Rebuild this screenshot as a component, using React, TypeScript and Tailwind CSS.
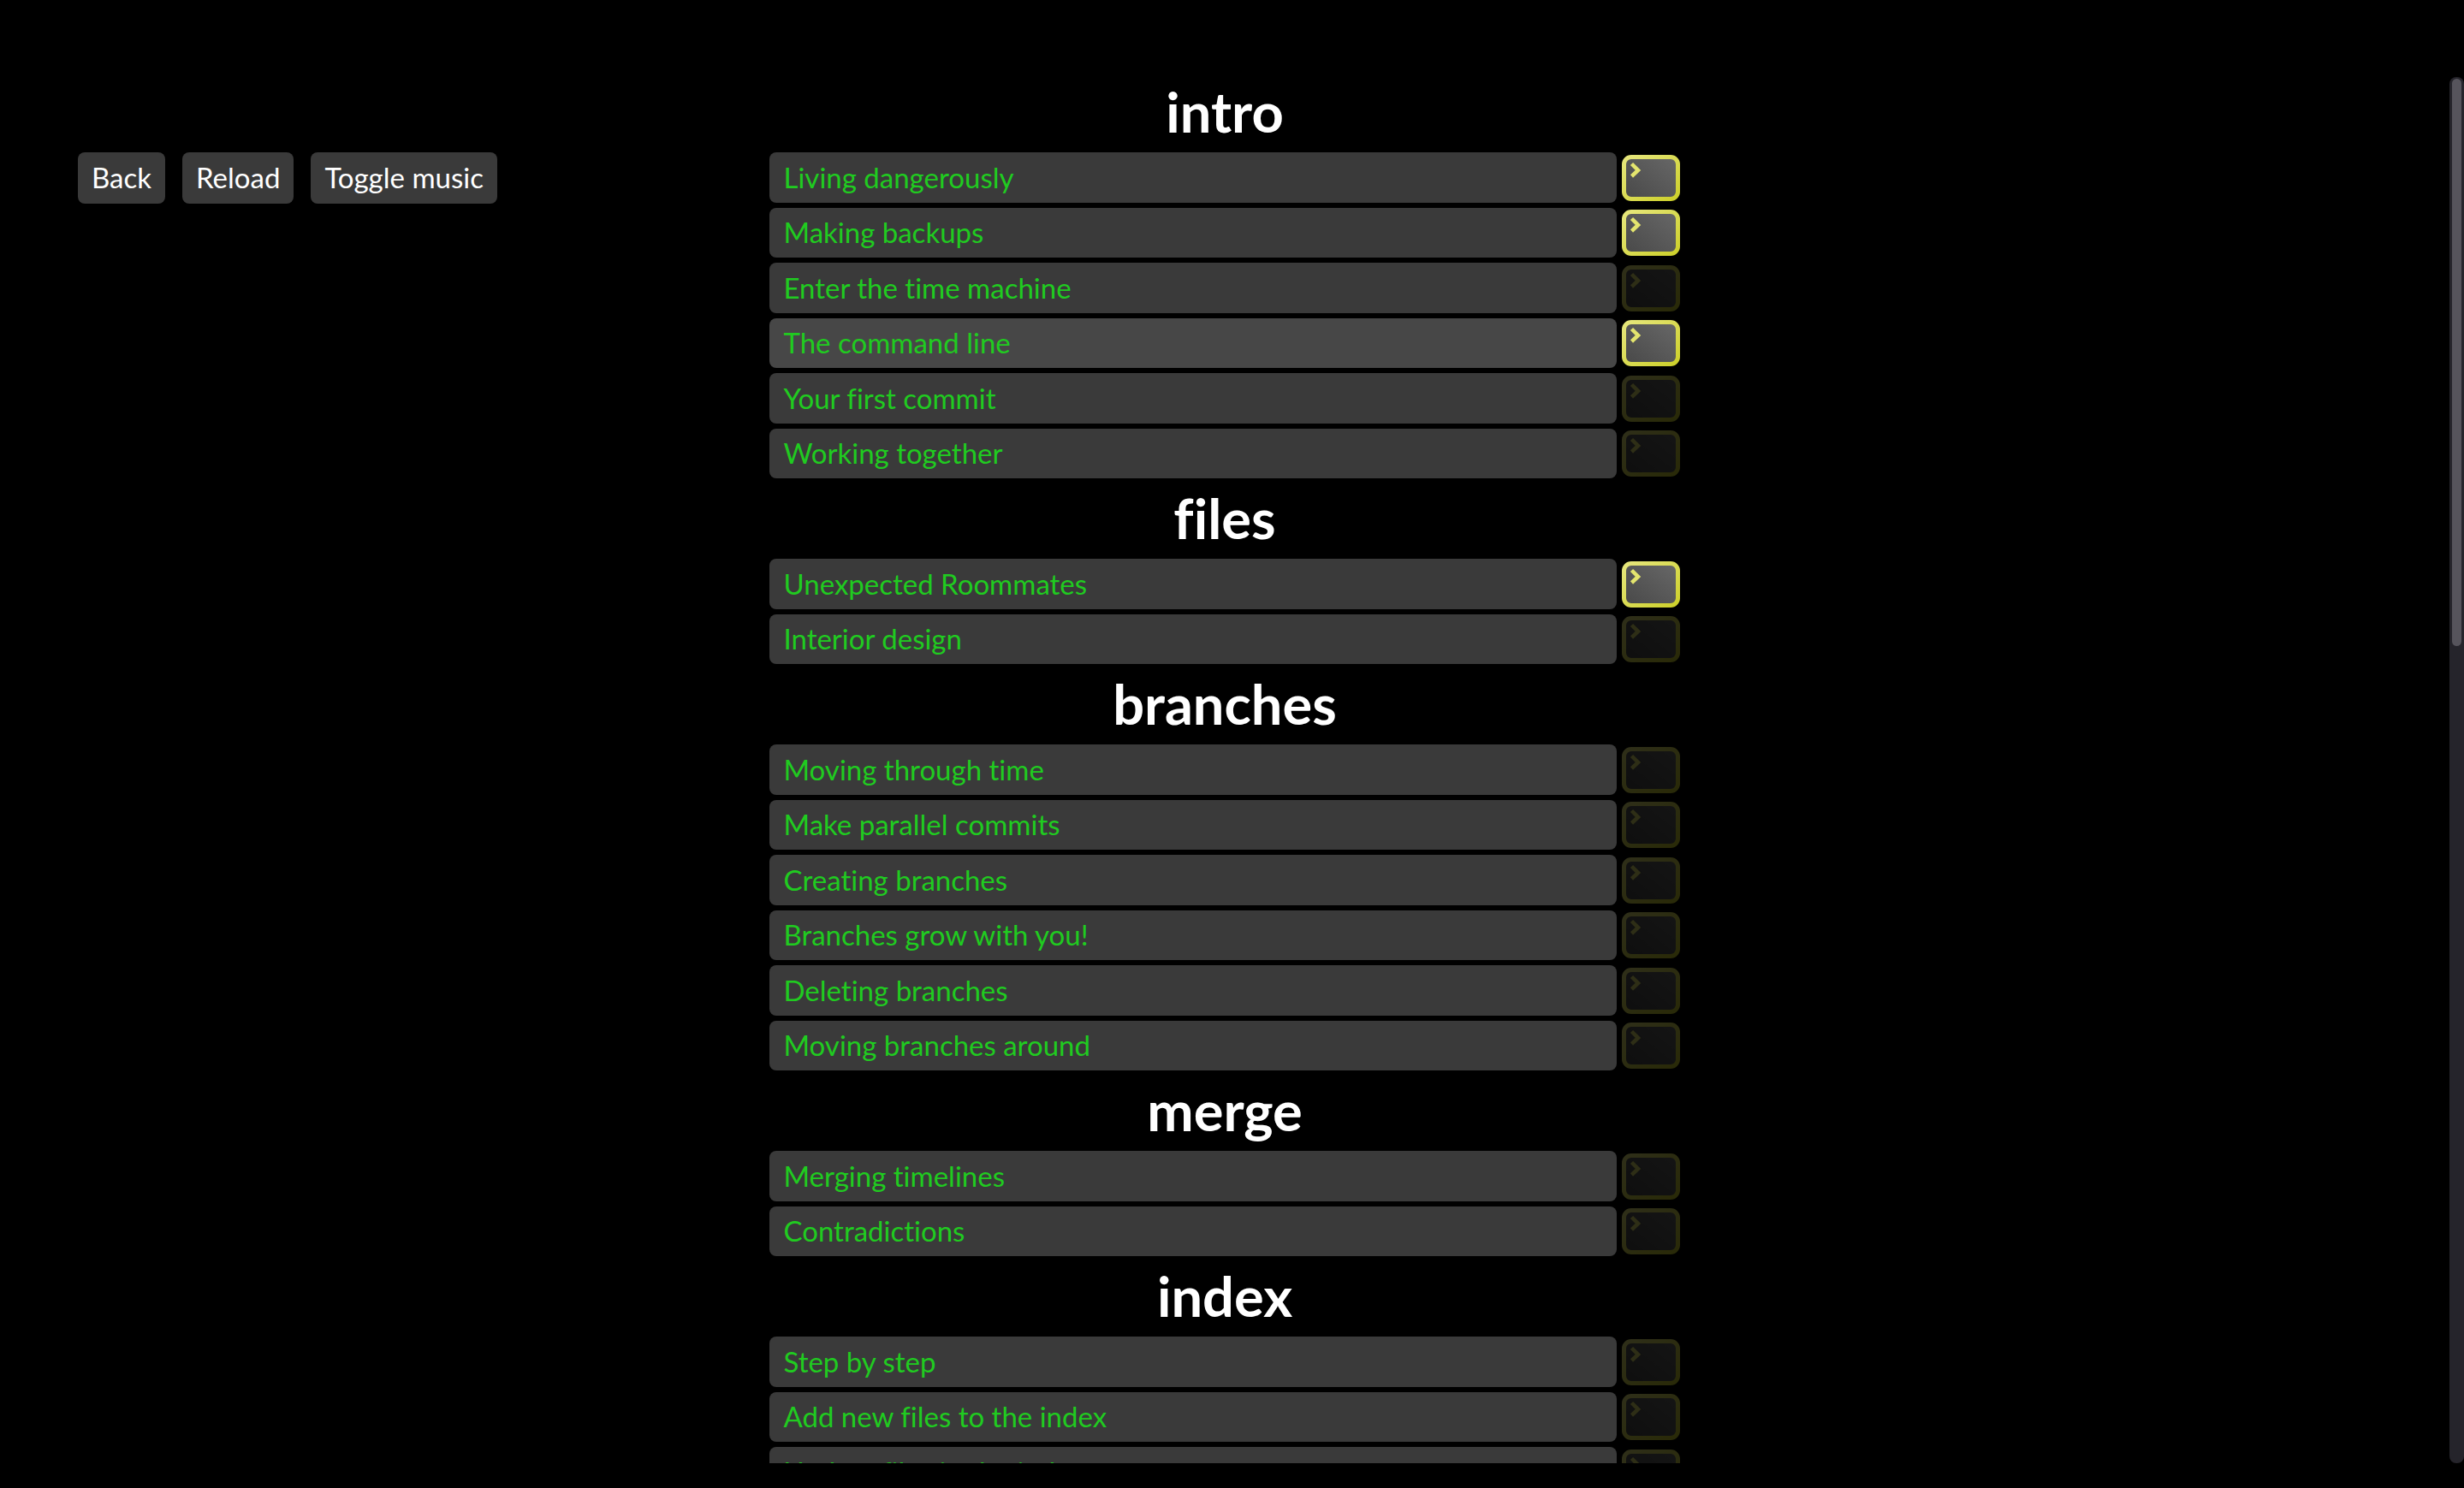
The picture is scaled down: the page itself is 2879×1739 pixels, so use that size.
type Level = { name: string; cli?: boolean; current?: boolean };
type Chapter = { title: string; levels: Level[] };

const chapters: Chapter[] = [
  {
    title: "intro",
    levels: [
      { name: "Living dangerously", cli: true },
      { name: "Making backups", cli: true },
      { name: "Enter the time machine" },
      { name: "The command line", cli: true, current: true },
      { name: "Your first commit" },
      { name: "Working together" },
    ],
  },
  {
    title: "files",
    levels: [{ name: "Unexpected Roommates", cli: true }, { name: "Interior design" }],
  },
  {
    title: "branches",
    levels: [
      { name: "Moving through time" },
      { name: "Make parallel commits" },
      { name: "Creating branches" },
      { name: "Branches grow with you!" },
      { name: "Deleting branches" },
      { name: "Moving branches around" },
    ],
  },
  {
    title: "merge",
    levels: [{ name: "Merging timelines" }, { name: "Contradictions" }],
  },
  {
    title: "index",
    levels: [
      { name: "Step by step" },
      { name: "Add new files to the index" },
      { name: "Update files in the index" },
    ],
  },
];

function TerminalBadge({ active }: { active?: boolean }) {
  return (
    <svg
      viewBox="0 0 68 54"
      className={active ? "h-[54px] w-[68px] shrink-0" : "h-[54px] w-[68px] shrink-0 opacity-20"}
      role="img"
      aria-label={active ? "Solved on the command line" : "Not solved on the command line"}
    >
      <defs>
        <linearGradient id="badge-fill" x1="0" y1="1" x2="1" y2="0">
          <stop offset="0" stopColor="#484848" />
          <stop offset="1" stopColor="#686868" />
        </linearGradient>
        <linearGradient id="badge-edge" x1="0" y1="0" x2="1" y2="1">
          <stop offset="0" stopColor="#e6e67c" />
          <stop offset="1" stopColor="#cdd02b" />
        </linearGradient>
      </defs>
      <rect x="2.5" y="2.5" width="63" height="49" rx="8.5" fill="url(#badge-fill)" stroke="url(#badge-edge)" strokeWidth="5" />
      <path d="M11.5 10.5 L19 18 L11.5 25" fill="none" stroke="#e4e56e" strokeWidth="4.5" />
    </svg>
  );
}

function LevelRow({ level }: { level: Level }) {
  return (
    <li className="flex items-center gap-[6px]">
      <button
        type="button"
        className={
          level.current
            ? "flex h-full flex-1 items-center rounded-lg bg-[#474747] px-4 pb-[2px] text-left text-[#20cb20]"
            : "flex h-full flex-1 items-center rounded-lg bg-[#3a3a3a] px-4 pb-[2px] text-left text-[#20cb20]"
        }
      >
        {level.name}
      </button>
      <TerminalBadge active={level.cli} />
    </li>
  );
}

function MenuButton({ label }: { label: string }) {
  return (
    <button type="button" className="h-[60px] rounded-lg bg-[#3a3a3a] px-4 pb-[2px] whitespace-nowrap text-white">
      {label}
    </button>
  );
}

export default function App() {
  return (
    <div className="flex h-screen bg-black pt-[90px] pb-[29px] font-['Lato',sans-serif] text-[33px] leading-[44px] [font-variant-ligatures:none]">
      <div className="grid min-w-0 flex-1 grid-cols-[11fr_13fr_11fr]">
        <nav className="flex min-w-0 items-start gap-5 pt-[88px] pl-[91px]">
          <MenuButton label="Back" />
          <MenuButton label="Reload" />
          <MenuButton label="Toggle music" />
        </nav>
        <main id="levels" className="min-w-0 overflow-hidden">
          {chapters.map((chapter) => (
            <section key={chapter.title}>
              <h2 className="h-[88px] text-center text-[65px] leading-[80px] font-bold text-white">{chapter.title}</h2>
              <ul className="grid auto-rows-[59px_58px] gap-[6px] pb-[6px]">
                {chapter.levels.map((level) => (
                  <LevelRow key={level.name} level={level} />
                ))}
              </ul>
            </section>
          ))}
        </main>
      </div>
      <div
        role="scrollbar"
        aria-orientation="vertical"
        aria-valuenow={0}
        aria-controls="levels"
        className="w-[17px] rounded-lg bg-[#25242b] px-[3px] py-[2px]"
      >
        <div className="h-[41%] rounded-full bg-[#56545c]" />
      </div>
    </div>
  );
}
